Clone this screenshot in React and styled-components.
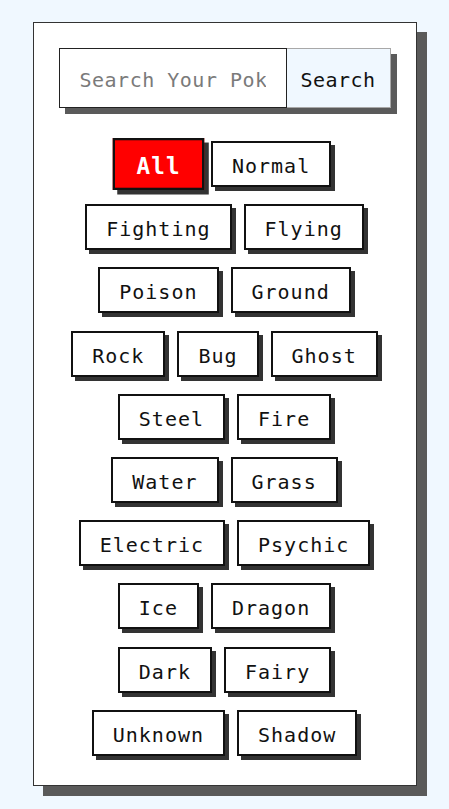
import React, { useState } from "react";
import styled, { createGlobalStyle } from "styled-components";

const GlobalStyle = createGlobalStyle`
  html, body {
    margin: 0;
    padding: 0;
    background: #f0f8ff;
  }
  body {
    font-family: "DejaVu Sans Mono", "Liberation Mono", monospace;
  }
  * { box-sizing: border-box; }
`;

const Page = styled.div`
  padding: 22px 0 13px;
  display: flex;
  justify-content: center;
`;

const Card = styled.div`
  width: 384px;
  background: #ffffff;
  border: 1px solid #333333;
  box-shadow: 10px 10px 0 #5a5a5a;
  padding: 25px 25px 29px;
  display: flex;
  flex-direction: column;
`;

const SearchBar = styled.form`
  display: flex;
  height: 60px;
  box-shadow: 6px 6px 0 #5a5a5a;
  margin: 0;
`;

const SearchInput = styled.input`
  flex: 1;
  min-width: 0;
  height: 100%;
  border: 1px solid #222222;
  background: #ffffff;
  padding: 4px 20px 0;
  font-family: "DejaVu Sans Mono", "Liberation Mono", monospace;
  font-size: 20px;
  letter-spacing: 0.5px;
  color: #222;
  outline: none;
  &::placeholder {
    color: #7a7a7a;
  }
`;

const SearchButton = styled.button`
  width: 104px;
  height: 100%;
  border: 1px solid #a8a8a8;
  border-left: none;
  background: #f0f8ff;
  font-family: "DejaVu Sans Mono", "Liberation Mono", monospace;
  font-size: 20px;
  letter-spacing: 0.5px;
  color: #111;
  padding: 4px 0 0;
  cursor: pointer;
`;

const Filters = styled.div`
  margin-top: 33px;
  padding: 0 10px;
  display: flex;
  flex-wrap: wrap;
  justify-content: center;
  gap: 17.2px 12px;
`;

const TypeButton = styled.button`
  border: 2px solid #111111;
  box-shadow: 4px 4px 0 #333333;
  background: ${(p) => (p.$active ? "#ff0000" : "#ffffff")};
  color: ${(p) => (p.$active ? "#ffffff" : "#111111")};
  font-weight: ${(p) => (p.$active ? "bold" : "normal")};
  transform: ${(p) => (p.$active ? "scale(1.13)" : "none")};
  font-family: "DejaVu Sans Mono", "Liberation Mono", monospace;
  font-size: 20px;
  letter-spacing: 1px;
  line-height: 22px;
  padding: 12px 19px 8px;
  cursor: pointer;
`;

const TYPES = [
  "All", "Normal", "Fighting", "Flying", "Poison", "Ground", "Rock", "Bug",
  "Ghost", "Steel", "Fire", "Water", "Grass", "Electric", "Psychic", "Ice",
  "Dragon", "Dark", "Fairy", "Unknown", "Shadow",
];

export default function App() {
  const [active, setActive] = useState("All");
  return (
    <>
      <GlobalStyle />
      <Page>
        <Card>
          <SearchBar onSubmit={(e) => e.preventDefault()}>
            <SearchInput placeholder="Search Your Pokemon" />
            <SearchButton type="submit">Search</SearchButton>
          </SearchBar>
          <Filters>
            {TYPES.map((t) => (
              <TypeButton key={t} $active={t === active} onClick={() => setActive(t)}>
                {t}
              </TypeButton>
            ))}
          </Filters>
        </Card>
      </Page>
    </>
  );
}
